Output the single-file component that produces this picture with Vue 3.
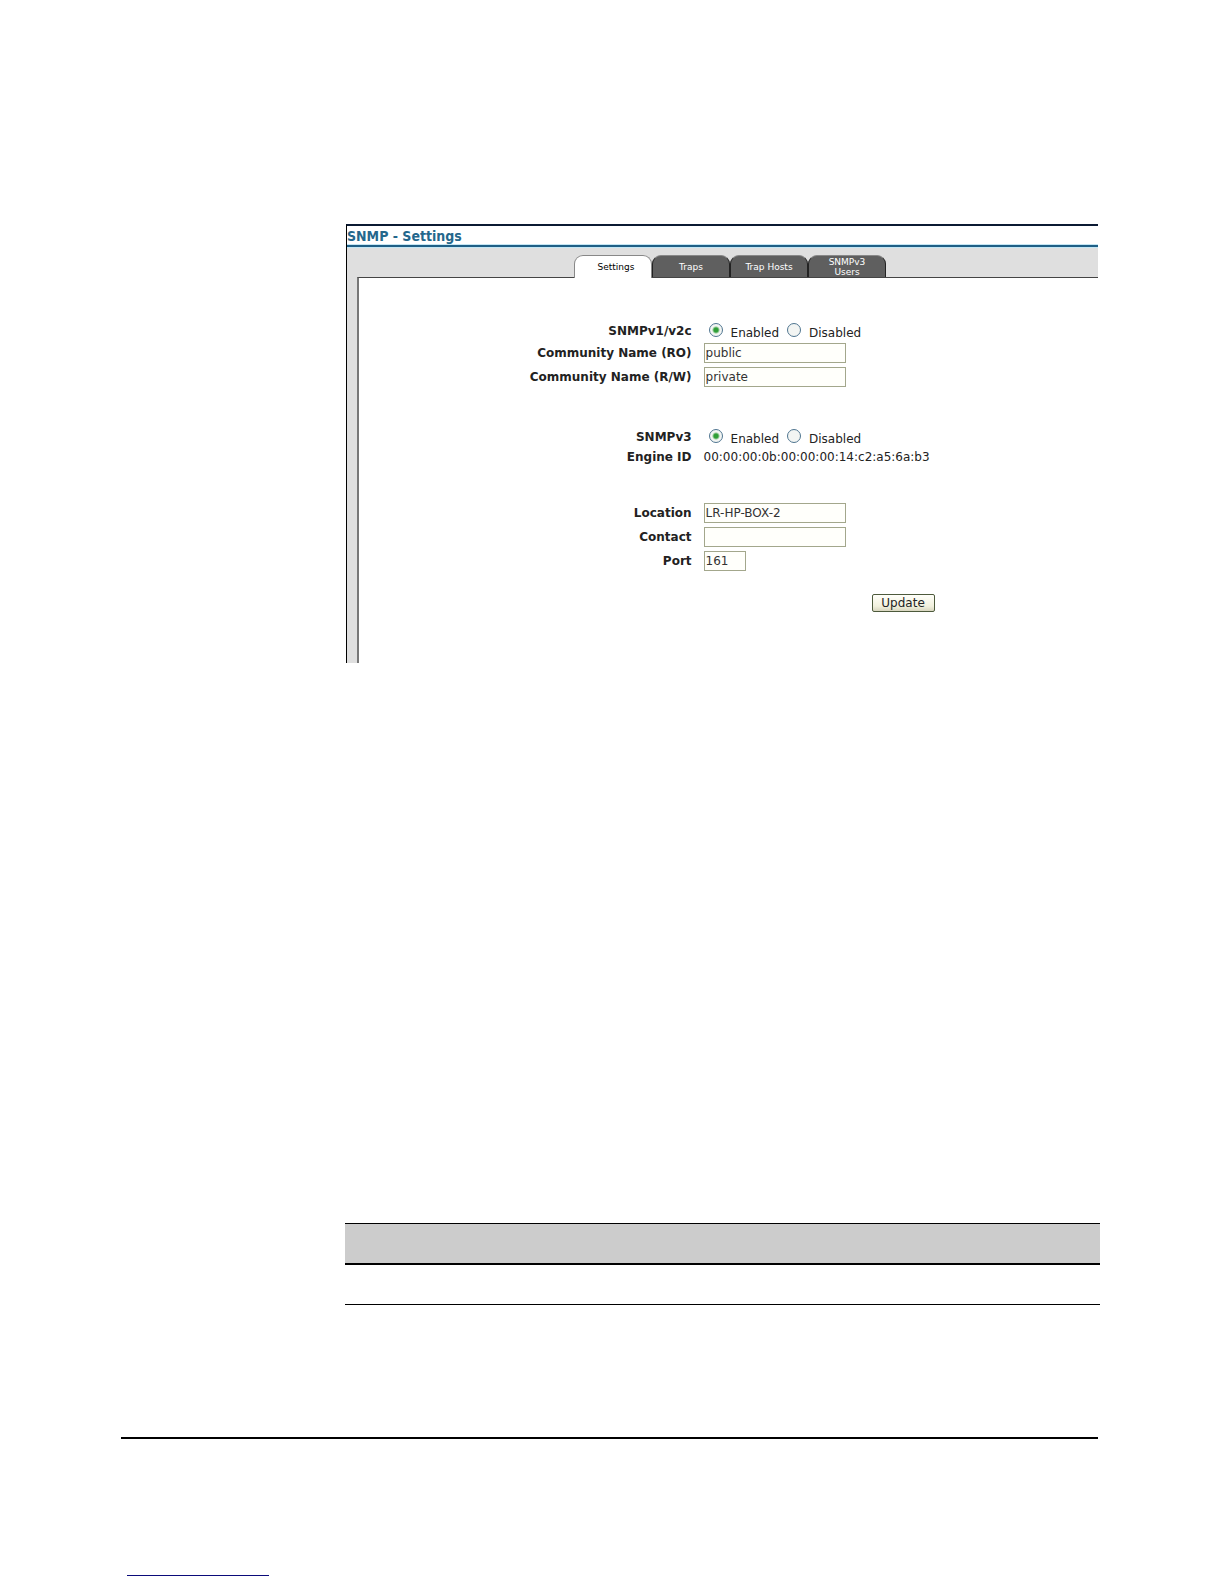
<script setup>
import { ref } from 'vue'

const tabs = ['Settings', 'Traps', 'Trap Hosts', 'SNMPv3 Users']
const activeTab = ref('Settings')

const v2 = ref('Enabled')
const v3 = ref('Enabled')
const readCommunity = ref('public')
const writeCommunity = ref('private')
const location = ref('LR-HP-BOX-2')
const contact = ref('')
const port = ref('161')
const engineId = '00:00:00:0b:00:00:00:14:c2:a5:6a:b3'
</script>

<template>
  <div class="page">
    <main>
      <section class="figure">
        <h1>SNMP - Settings</h1>
        <div class="body">
          <nav class="tabs">
            <button
              v-for="tab in tabs"
              :key="tab"
              type="button"
              class="tab"
              :class="{ active: tab === activeTab }"
              @click="activeTab = tab"
            >{{ tab }}</button>
          </nav>
          <form class="panel" @submit.prevent>
            <div class="group versions">
              <div class="row" role="radiogroup" aria-labelledby="v2-label">
                <span id="v2-label" class="name">SNMPv1/v2c</span>
                <div class="choices">
                  <label v-for="o in ['Enabled', 'Disabled']" :key="o">
                    <input v-model="v2" type="radio" name="v2" :value="o"><span>{{ o }}</span>
                  </label>
                </div>
              </div>
              <div class="row tall">
                <label class="name" for="ro">Community Name (RO)</label>
                <input id="ro" v-model="readCommunity" class="field" type="text">
              </div>
              <div class="row tall">
                <label class="name" for="rw">Community Name (R/W)</label>
                <input id="rw" v-model="writeCommunity" class="field" type="text">
              </div>
            </div>
            <div class="group engine">
              <div class="row" role="radiogroup" aria-labelledby="v3-label">
                <span id="v3-label" class="name">SNMPv3</span>
                <div class="choices">
                  <label v-for="o in ['Enabled', 'Disabled']" :key="o">
                    <input v-model="v3" type="radio" name="v3" :value="o"><span>{{ o }}</span>
                  </label>
                </div>
              </div>
              <div class="row">
                <span class="name">Engine ID</span>
                <span>{{ engineId }}</span>
              </div>
            </div>
            <div class="group system">
              <div class="row tall">
                <label class="name" for="location">Location</label>
                <input id="location" v-model="location" class="field" type="text">
              </div>
              <div class="row tall">
                <label class="name" for="contact">Contact</label>
                <input id="contact" v-model="contact" class="field" type="text">
              </div>
              <div class="row tall">
                <label class="name" for="port">Port</label>
                <input id="port" v-model="port" class="field short" type="text">
              </div>
            </div>
            <div class="row">
              <div class="actions">
                <button type="submit" class="update">Update</button>
              </div>
            </div>
          </form>
        </div>
      </section>

      <table>
        <thead><tr><th></th></tr></thead>
        <tbody><tr><td></td></tr></tbody>
      </table>
    </main>

    <footer>
      <hr>
      <a href="#"></a>
    </footer>
  </div>
</template>

<style>
body {
  margin: 0;
  background: #fff;
}
</style>

<style scoped>
.page {
  box-sizing: border-box;
  min-height: 100vh;
  padding: 224px 124px 8px 121px;
  font-family: "DejaVu Sans", Verdana, sans-serif;
  font-size: 12px;
  color: #222;
}

main {
  padding-left: 224px;
}

.figure {
  margin: 0 2px 560px 1px;
  border-top: 2px solid #0b1a33;
  border-left: 1px solid #000;
}

h1 {
  margin: 0;
  height: 18px;
  border-bottom: 1px solid #c4e6f4;
  font-family: "DejaVu Sans Condensed", "DejaVu Sans", Tahoma, sans-serif;
  font-size: 14px;
  line-height: 20px;
  color: #24678c;
}

.body {
  padding-left: 10px;
  border-top: 2px solid #1f5f86;
  background: #dfdfdf;
  box-shadow: inset 0 1px #c4e6f4;
}

.tabs {
  display: flex;
  margin-left: 217px;
  padding-top: 8px;
}

.tab {
  width: 78px;
  height: 22px;
  padding: 0 16px;
  border: 1px solid #222;
  border-top-color: #888;
  border-bottom: 0;
  border-radius: 9px 9px 0 0;
  background: #5f5f5f;
  font-family: "DejaVu Sans", Verdana, sans-serif;
  font-size: 9px;
  line-height: 10px;
  color: #fff;
}

.tab:nth-child(3) {
  padding: 0;
}

.tab.active {
  position: relative;
  height: 23px;
  margin-bottom: -1px;
  padding: 0 8px 0 14px;
  border-color: #888;
  background: #fff;
  color: #000;
}

.panel {
  padding: 43px 0 50px;
  border-top: 1px solid #444;
  border-left: 2px solid #777;
  background: #fff;
}

.versions {
  margin-bottom: 38px;
}

.engine {
  margin-bottom: 34px;
}

.system {
  margin-bottom: 20px;
}

.row {
  display: grid;
  grid-template-columns: 45% 1fr;
  column-gap: 12px;
  align-items: center;
  min-height: 20px;
}

.row.tall {
  min-height: 24px;
}

.name {
  text-align: right;
  font-weight: bold;
}

.choices {
  display: flex;
  gap: 8px;
  padding-left: 5px;
}

.choices label {
  display: flex;
  gap: 8px;
}

.choices span {
  padding-top: 4px;
}

.choices input {
  appearance: none;
  box-sizing: border-box;
  width: 14px;
  height: 14px;
  margin: 1px 0 0;
  border: 1px solid #4f7590;
  border-radius: 50%;
  background: #f3f5f3;
}

.choices input:checked {
  background: radial-gradient(circle, #2f9e36 0 2px, #f3f5f3 4px);
}

.field {
  box-sizing: border-box;
  width: 142px;
  height: 20px;
  padding: 0 1px;
  border: 1px solid #a3a78c;
  background: #fffffb;
  font: inherit;
  color: #333;
}

.field.short {
  width: 42px;
}

.actions {
  grid-column: 2;
  display: flex;
  justify-content: flex-end;
  width: 231px;
}

.update {
  width: 63px;
  height: 18px;
  padding: 0;
  border: 1px solid #4d5a3c;
  border-radius: 2px;
  background: linear-gradient(#fffffa, #f1f0dd 70%, #d8d6bf);
  font: inherit;
  line-height: 16px;
  color: #222;
}

table {
  width: 100%;
  border-collapse: separate;
  border-spacing: 0;
}

th,
td {
  height: 39px;
  padding: 0;
  border-bottom: 1px solid #000;
}

th {
  border-top: 1px solid #000;
  border-bottom-width: 2px;
  background: #ccc;
}

footer {
  margin-right: 2px;
}

hr {
  margin: 132px 0 136px;
  border: 0;
  border-top: 2px solid #000;
}

footer a {
  display: block;
  width: 142px;
  margin-left: 6px;
  border-bottom: 1px solid #0b0b7a;
}
</style>
